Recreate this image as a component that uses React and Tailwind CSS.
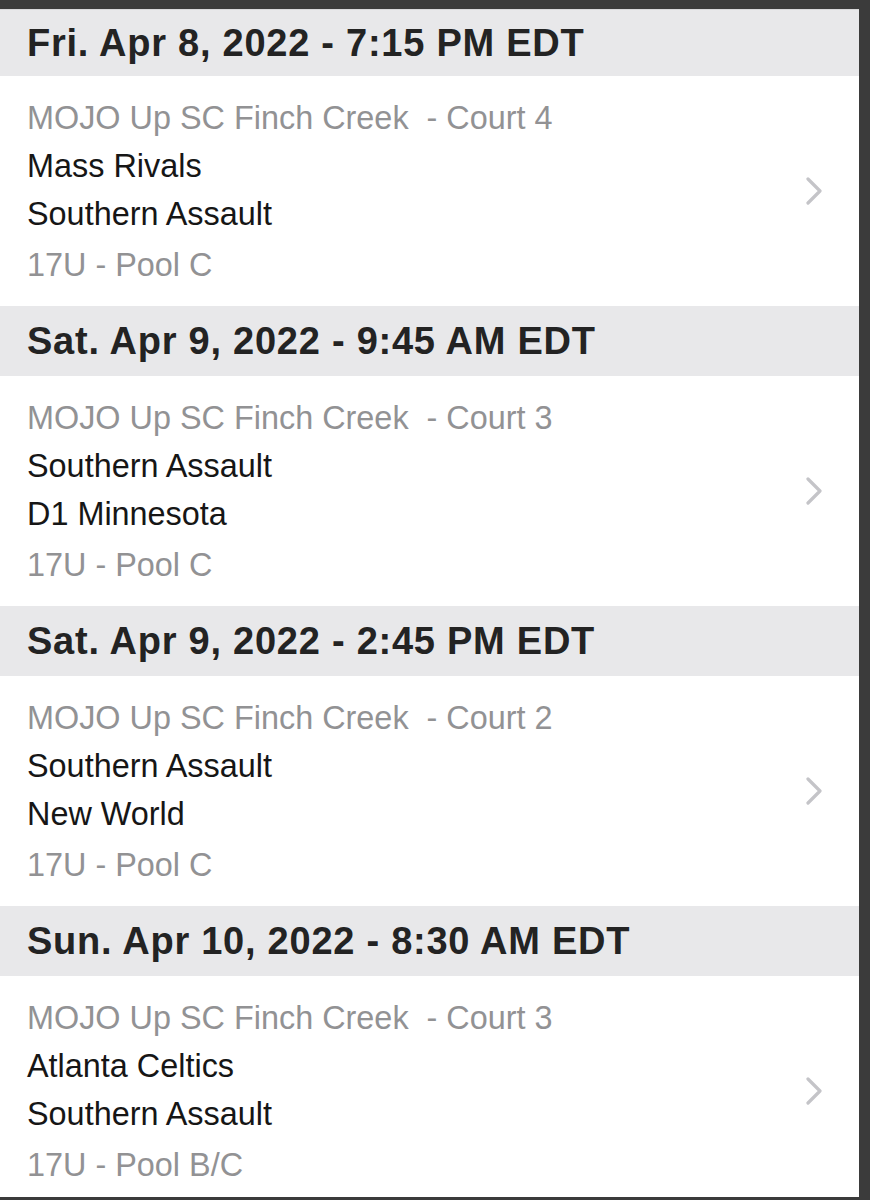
const GAMES = [
  {
    when: 'Fri. Apr 8, 2022 - 7:15 PM EDT',
    venue: 'MOJO Up SC Finch Creek  - Court 4',
    home: 'Mass Rivals',
    away: 'Southern Assault',
    pool: '17U - Pool C',
  },
  {
    when: 'Sat. Apr 9, 2022 - 9:45 AM EDT',
    venue: 'MOJO Up SC Finch Creek  - Court 3',
    home: 'Southern Assault',
    away: 'D1 Minnesota',
    pool: '17U - Pool C',
  },
  {
    when: 'Sat. Apr 9, 2022 - 2:45 PM EDT',
    venue: 'MOJO Up SC Finch Creek  - Court 2',
    home: 'Southern Assault',
    away: 'New World',
    pool: '17U - Pool C',
  },
  {
    when: 'Sun. Apr 10, 2022 - 8:30 AM EDT',
    venue: 'MOJO Up SC Finch Creek  - Court 3',
    home: 'Atlanta Celtics',
    away: 'Southern Assault',
    pool: '17U - Pool B/C',
  },
]

function Chevron() {
  return (
    <svg width="18" height="28" viewBox="0 0 18 28" fill="none" className="shrink-0">
      <path d="M3 2 L15 14 L3 26" stroke="#c4c4c8" strokeWidth="3.2" strokeLinecap="round" strokeLinejoin="round" />
    </svg>
  )
}

function GameRow({ game, first }) {
  return (
    <div>
      <div
        className={`flex items-center bg-[#e8e8ea] pl-[27px] text-[38px] font-bold tracking-[0.75px] text-[#232323] ${first ? 'h-[66px]' : 'h-[70px]'}`}
      >
        {game.when}
      </div>
      <div className="flex h-[230px] items-center bg-white pr-[36px]">
        <div className="flex-1 pl-[27px] text-[32.4px] leading-[48px]">
          <p className="whitespace-pre text-[#929294]">{game.venue}</p>
          <p className="text-[#161616]">{game.home}</p>
          <p className="text-[#161616]">{game.away}</p>
          <p className="mt-[3px] text-[#929294]">{game.pool}</p>
        </div>
        <Chevron />
      </div>
    </div>
  )
}

export default function App() {
  return (
    <div className="h-[1200px] w-[870px] overflow-hidden bg-[#3b3b3b] pt-[9px] pr-[11px] pb-[3px] font-['Liberation_Sans',Arial,sans-serif]">
      <div className="h-full overflow-hidden border-t border-[#d8d8da] bg-white">
        {GAMES.map((g, i) => (
          <GameRow key={i} game={g} first={i === 0} />
        ))}
      </div>
    </div>
  )
}
